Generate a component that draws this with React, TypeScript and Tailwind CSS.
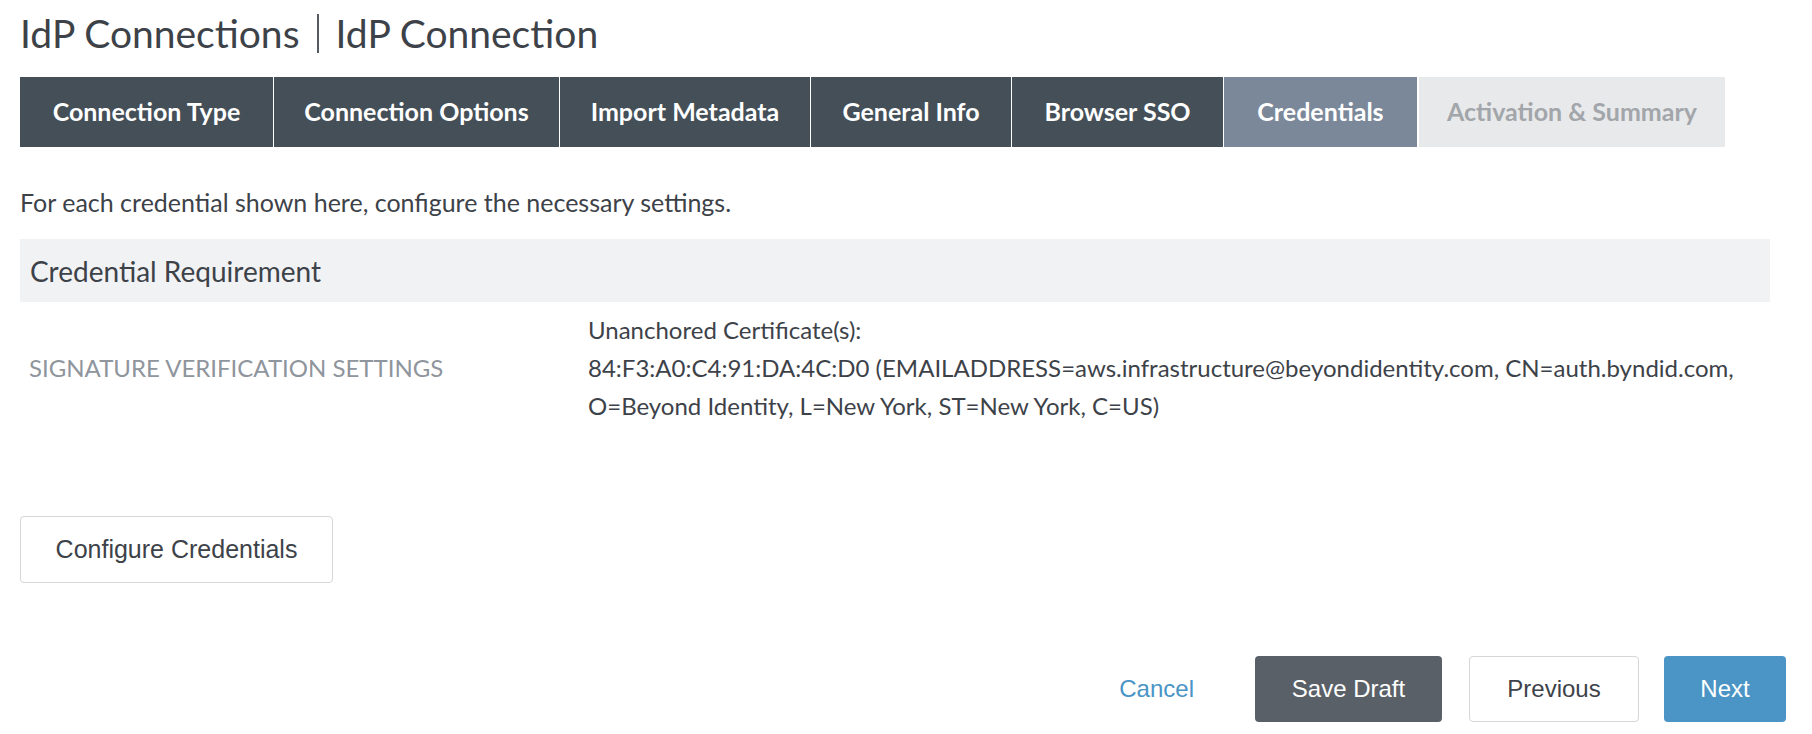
import React from 'react'

type TabState = 'done' | 'active' | 'disabled'

interface Tab {
  label: string
  width: string
  state: TabState
}

// wizard steps, widths taken from the screenshot
const tabs: Tab[] = [
  { label: 'Connection Type', width: 'w-[253px]', state: 'done' },
  { label: 'Connection Options', width: 'w-[285px]', state: 'done' },
  { label: 'Import Metadata', width: 'w-[250px]', state: 'done' },
  { label: 'General Info', width: 'w-[200px]', state: 'done' },
  { label: 'Browser SSO', width: 'w-[211px]', state: 'done' },
  { label: 'Credentials', width: 'w-[193px]', state: 'active' },
  { label: 'Activation & Summary', width: 'w-[306px]', state: 'disabled' },
]

const tabColors: Record<TabState, string> = {
  done: 'bg-[#444f58] text-white',
  active: 'bg-[#7b889a] text-white',
  disabled: 'ml-px bg-[#e8e9ea] text-[#a2a6aa]',
}

function WizardTabs() {
  return (
    <div className="mt-[11px] flex h-[70px] gap-px">
      {tabs.map((tab) => (
        <div key={tab.label} className={`flex items-center justify-center text-[25px] font-bold ${tab.width} ${tabColors[tab.state]}`}>
          {tab.label}
        </div>
      ))}
    </div>
  )
}

export default function App() {
  return (
    <div className="min-h-screen bg-white pl-[20px] pr-[26px] font-['Lato','Liberation_Sans',sans-serif] text-[#3d4249]">
      {/* Breadcrumb title */}
      <div className="flex h-[66px] items-center text-[39px] leading-none">
        <span>IdP Connections</span>
        <span className="mx-[17px] h-[39px] w-[2px] bg-[#555b62]" />
        <span>IdP Connection</span>
      </div>

      <WizardTabs />

      <div className="flex h-[92px] items-center pt-[20px] text-[25px]">For each credential shown here, configure the necessary settings.</div>

      {/* Credential table */}
      <div className="flex h-[63px] w-[1750px] items-center bg-[#f1f2f4] pl-[10px] text-[28px]">Credential Requirement</div>
      <div className="flex items-center py-[9px]">
        <div className="w-[568px] pl-[9px] text-[24px] uppercase text-[#8f959c]">Signature Verification Settings</div>
        <div className="text-[24px] leading-[38px]">
          <div>Unanchored Certificate(s):</div>
          <div className="whitespace-nowrap">84:F3:A0:C4:91:DA:4C:D0 (EMAILADDRESS=aws.infrastructure@beyondidentity.com, CN=auth.byndid.com,</div>
          <div className="whitespace-nowrap">O=Beyond Identity, L=New York, ST=New York, C=US)</div>
        </div>
      </div>

      <button className="mt-[82px] h-[67px] w-[313px] rounded-[4px] border border-[#d4d6d9] bg-white font-['Liberation_Sans',sans-serif] text-[25px] text-[#3d4249]">
        Configure Credentials
      </button>

      {/* Footer actions */}
      <div className="mt-[73px] flex items-center justify-end font-['Liberation_Sans',sans-serif] text-[24px]">
        <button className="mr-[61px] text-[#4a94c6]">Cancel</button>
        <button className="h-[66px] w-[187px] rounded-[4px] bg-[#5a6068] text-white">Save Draft</button>
        <button className="ml-[27px] h-[66px] w-[170px] rounded-[4px] border border-[#d4d6d9] bg-white text-[#3d4249]">Previous</button>
        <button className="ml-[25px] h-[66px] w-[122px] rounded-[4px] bg-[#4a94c6] text-white">Next</button>
      </div>
    </div>
  )
}
